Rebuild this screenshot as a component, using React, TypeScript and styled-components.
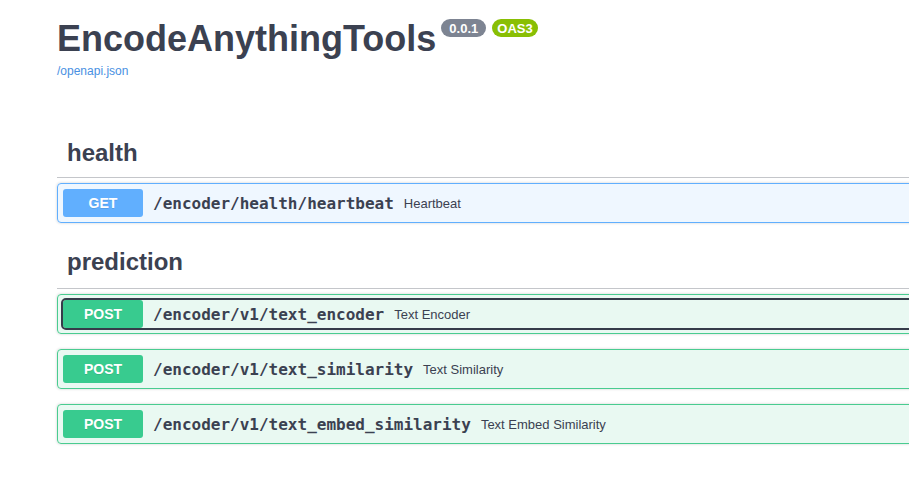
import { FC } from 'react';
import styled, { createGlobalStyle } from 'styled-components';

const GlobalStyle = createGlobalStyle`
  html, body {
    margin: 0;
    padding: 0;
    background: #fff;
    overflow: hidden;
  }
  body {
    font-family: "Liberation Sans", Arial, sans-serif;
    color: #3b4151;
  }
`;

type Method = 'get' | 'post';

const methodColors: Record<Method, { main: string; badge: string; bg: string }> = {
  get: { main: '#61affe', badge: '#61affe', bg: 'rgba(97, 175, 254, 0.1)' },
  post: { main: '#49cc90', badge: '#38cb8f', bg: 'rgba(73, 204, 144, 0.12)' },
};

interface Operation {
  method: Method;
  path: string;
  summary: string;
  focused?: boolean;
}

interface Tag {
  name: string;
  operations: Operation[];
}

const tags: Tag[] = [
  {
    name: 'health',
    operations: [{ method: 'get', path: '/encoder/health/heartbeat', summary: 'Heartbeat' }],
  },
  {
    name: 'prediction',
    operations: [
      { method: 'post', path: '/encoder/v1/text_encoder', summary: 'Text Encoder', focused: true },
      { method: 'post', path: '/encoder/v1/text_similarity', summary: 'Text Similarity' },
      { method: 'post', path: '/encoder/v1/text_embed_similarity', summary: 'Text Embed Similarity' },
    ],
  },
];

const OperationBlock: FC<{ op: Operation }> = ({ op }) => (
  <Opblock $method={op.method}>
    <SummaryControl $focused={op.focused}>
      <MethodBadge $method={op.method}>{op.method.toUpperCase()}</MethodBadge>
      <SummaryPath>{op.path}</SummaryPath>
      <SummaryDescription>{op.summary}</SummaryDescription>
    </SummaryControl>
  </Opblock>
);

const App: FC = () => (
  <>
    <GlobalStyle />
    <Wrapper>
      <Info>
        <TitleRow>
          <Title>EncodeAnythingTools</Title>
          <Badges>
            <Badge $color="#7d8492">0.0.1</Badge>
            <Badge $color="#89bf04">OAS3</Badge>
          </Badges>
        </TitleRow>
        <SpecLink href="#">/openapi.json</SpecLink>
      </Info>
      {tags.map((tag) => (
        <TagSection key={tag.name}>
          <TagHeader>{tag.name}</TagHeader>
          {tag.operations.map((op) => (
            <OperationBlock key={op.path} op={op} />
          ))}
        </TagSection>
      ))}
    </Wrapper>
  </>
);

const Wrapper = styled.div`
  width: 1200px;
  padding: 0 0 0 57px;
`;

const Info = styled.div`
  display: flex;
  flex-direction: column;
  align-items: flex-start;
  padding-top: 18px;
  margin-bottom: 51px;
`;

const TitleRow = styled.div`
  display: flex;
  align-items: flex-start;
`;

const Title = styled.h2`
  margin: 0;
  font-size: 36px;
  font-weight: 700;
  color: #3b4151;
`;

const Badges = styled.div`
  display: flex;
  gap: 6px;
  margin: 1px 0 0 5px;
`;

const Badge = styled.span<{ $color: string }>`
  display: inline-flex;
  align-items: center;
  justify-content: center;
  min-width: 45px;
  height: 18px;
  padding: 0 5px;
  box-sizing: border-box;
  border-radius: 57px;
  background: ${(p) => p.$color};
  color: #fff;
  font-size: 13px;
  font-weight: 700;
`;

const SpecLink = styled.a`
  margin-top: 4px;
  font-size: 12px;
  color: #4990e2;
  text-decoration: none;
`;

const TagHeader = styled.h3`
  margin: 0 0 5px;
  padding: 10px 20px 10px 10px;
  font-size: 24px;
  font-weight: 700;
  color: #3b4151;
  border-bottom: 1px solid rgba(59, 65, 81, 0.3);
`;

const TagSection = styled.div`
  display: flex;
  flex-direction: column;

  & + & ${TagHeader} {
    padding-bottom: 12px;
  }
`;

const Opblock = styled.div<{ $method: Method }>`
  margin: 0 0 15px;
  padding: 5px;
  border: 1px solid ${(p) => methodColors[p.$method].main};
  border-radius: 4px;
  background: ${(p) => methodColors[p.$method].bg};
  box-shadow: 0 0 3px rgba(0, 0, 0, 0.19);
  display: flex;
`;

const SummaryControl = styled.div<{ $focused?: boolean }>`
  flex: 1;
  display: flex;
  align-items: center;
  border-radius: 3px;
  outline: ${(p) => (p.$focused ? '2px solid #363c4a' : 'none')};
`;

const MethodBadge = styled.span<{ $method: Method }>`
  min-width: 80px;
  padding: 6px 0;
  border-radius: 3px;
  background: ${(p) => methodColors[p.$method].badge};
  color: #fff;
  font-size: 14px;
  line-height: 16px;
  font-weight: 700;
  text-align: center;
  text-shadow: 0 1px 0 rgba(0, 0, 0, 0.1);
`;

const SummaryPath = styled.span`
  padding: 0 10px;
  font-family: "DejaVu Sans Mono", monospace;
  font-size: 16px;
  font-weight: 700;
  color: #3b4151;
`;

const SummaryDescription = styled.span`
  font-size: 13px;
  color: #3b4151;
`;

export default App;
